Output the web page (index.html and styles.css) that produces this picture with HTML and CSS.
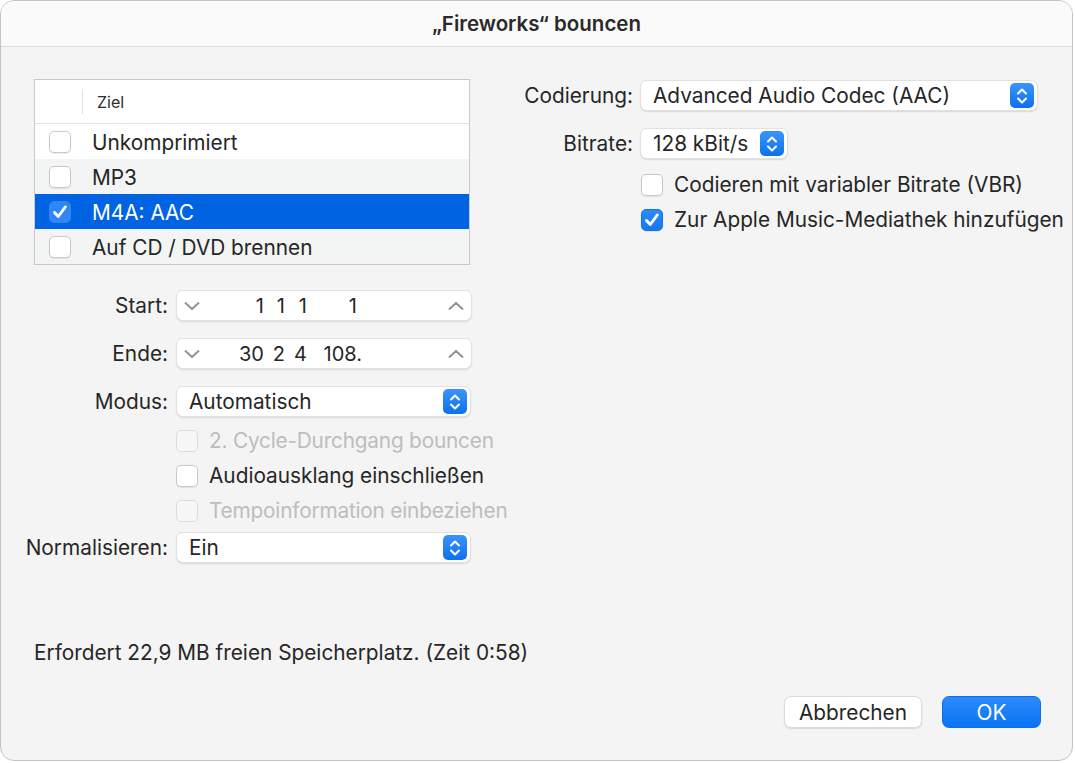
FILE: index.html
```html
<!DOCTYPE html>
<html lang="de">
<head>
<meta charset="utf-8">
<title>„Fireworks“ bouncen</title>
<link rel="stylesheet" href="styles.css">
</head>
<body>
<div class="window">
  <div class="titlebar"><span class="title">„Fireworks“ bouncen</span></div>
  <div class="content">
    <div class="main">
      <div class="left">
        <div class="table">
          <div class="thead"><span class="colsep"></span><span class="th">Ziel</span></div>
          <div class="trow"><span class="cb"></span><span class="tlabel">Unkomprimiert</span></div>
          <div class="trow alt"><span class="cb"></span><span class="tlabel">MP3</span></div>
          <div class="trow sel"><span class="cb on-sel"><svg viewBox="0 0 22 22" width="22" height="22"><path d="M5.5 11.5 L9.3 15.5 L16.3 6" fill="none" stroke="#fff" stroke-width="2.9" stroke-linecap="round" stroke-linejoin="round"/></svg></span><span class="tlabel">M4A: AAC</span></div>
          <div class="trow alt"><span class="cb"></span><span class="tlabel">Auf CD / DVD brennen</span></div>
        </div>

        <div class="form">
          <div class="frow first">
            <span class="flabel">Start:</span>
            <div class="stepper">
              <svg class="chev" viewBox="0 0 16 8" width="16" height="8"><path d="M1.5 1 L8 7 L14.5 1" fill="none" stroke="#8d8d8d" stroke-width="1.8" stroke-linecap="round" stroke-linejoin="round"/></svg>
              <div class="vals"><span class="v1">1</span><span class="v2">1</span><span class="v3">1</span><span class="v4">1</span></div>
              <svg class="chev" viewBox="0 0 16 8" width="16" height="8"><path d="M1.5 7 L8 1 L14.5 7" fill="none" stroke="#8d8d8d" stroke-width="1.8" stroke-linecap="round" stroke-linejoin="round"/></svg>
            </div>
          </div>
          <div class="frow">
            <span class="flabel">Ende:</span>
            <div class="stepper">
              <svg class="chev" viewBox="0 0 16 8" width="16" height="8"><path d="M1.5 1 L8 7 L14.5 1" fill="none" stroke="#8d8d8d" stroke-width="1.8" stroke-linecap="round" stroke-linejoin="round"/></svg>
              <div class="vals"><span class="v1">30</span><span class="v2">2</span><span class="v3">4</span><span class="v4 last">108.</span></div>
              <svg class="chev" viewBox="0 0 16 8" width="16" height="8"><path d="M1.5 7 L8 1 L14.5 7" fill="none" stroke="#8d8d8d" stroke-width="1.8" stroke-linecap="round" stroke-linejoin="round"/></svg>
            </div>
          </div>
          <div class="frow">
            <span class="flabel">Modus:</span>
            <div class="popup wide">
              <span class="ptext">Automatisch</span>
              <span class="arrows"><svg viewBox="0 0 24 26" width="24" height="26"><path d="M8 10.5 L12 6.5 L16 10.5 M8 15.5 L12 19.5 L16 15.5" fill="none" stroke="#fff" stroke-width="2" stroke-linecap="round" stroke-linejoin="round"/></svg></span>
            </div>
          </div>
          <div class="crow disabled"><span class="cb"></span><span>2. Cycle-Durchgang bouncen</span></div>
          <div class="crow"><span class="cb"></span><span>Audioausklang einschließen</span></div>
          <div class="crow disabled"><span class="cb"></span><span>Tempoinformation einbeziehen</span></div>
          <div class="frow norm">
            <span class="flabel">Normalisieren:</span>
            <div class="popup wide">
              <span class="ptext">Ein</span>
              <span class="arrows"><svg viewBox="0 0 24 26" width="24" height="26"><path d="M8 10.5 L12 6.5 L16 10.5 M8 15.5 L12 19.5 L16 15.5" fill="none" stroke="#fff" stroke-width="2" stroke-linecap="round" stroke-linejoin="round"/></svg></span>
            </div>
          </div>
        </div>
      </div>

      <div class="right">
        <div class="rrow">
          <span class="rlabel">Codierung:</span>
          <div class="popup codec">
            <span class="ptext">Advanced Audio Codec (AAC)</span>
            <span class="arrows"><svg viewBox="0 0 24 26" width="24" height="26"><path d="M8 10.5 L12 6.5 L16 10.5 M8 15.5 L12 19.5 L16 15.5" fill="none" stroke="#fff" stroke-width="2" stroke-linecap="round" stroke-linejoin="round"/></svg></span>
          </div>
        </div>
        <div class="rrow second">
          <span class="rlabel">Bitrate:</span>
          <div class="popup bitrate">
            <span class="ptext">128 kBit/s</span>
            <span class="arrows"><svg viewBox="0 0 24 26" width="24" height="26"><path d="M8 10.5 L12 6.5 L16 10.5 M8 15.5 L12 19.5 L16 15.5" fill="none" stroke="#fff" stroke-width="2" stroke-linecap="round" stroke-linejoin="round"/></svg></span>
          </div>
        </div>
        <div class="rcheck first"><span class="cb"></span><span>Codieren mit variabler Bitrate (VBR)</span></div>
        <div class="rcheck"><span class="cb checked"><svg viewBox="0 0 22 22" width="22" height="22"><path d="M5.5 11.5 L9.3 15.5 L16.3 6" fill="none" stroke="#fff" stroke-width="2.9" stroke-linecap="round" stroke-linejoin="round"/></svg></span><span>Zur Apple Music-Mediathek hinzufügen</span></div>
      </div>
    </div>

    <div class="info">Erfordert 22,9 MB freien Speicherplatz. (Zeit 0:58)</div>
    <div class="buttons">
      <button class="btn cancel">Abbrechen</button>
      <button class="btn ok">OK</button>
    </div>
  </div>
</div>
</body>
</html>
```

FILE: styles.css
```css
* { box-sizing: border-box; }

html, body {
  margin: 0;
  padding: 0;
  background: #ffffff;
}

body {
  font-family: Inter, "Noto Sans", "Liberation Sans", sans-serif;
  font-size: 20.8px;
  color: #262626;
}

.window {
  width: 1073px;
  height: 761px;
  border: 1px solid #c4c4c4;
  border-radius: 14px;
  background: #f4f4f4;
  overflow: hidden;
  display: flex;
  flex-direction: column;
}

.titlebar {
  height: 46px;
  flex: 0 0 46px;
  background: #fafafa;
  border-bottom: 1px solid #dedede;
  display: flex;
  align-items: center;
  justify-content: center;
}

.title {
  font-size: 20.5px;
  font-weight: 600;
  color: #2a2a2a;
  padding-bottom: 1px;
}

.content {
  flex: 1;
  display: flex;
  flex-direction: column;
}

.main {
  flex: 1;
  display: flex;
  padding-top: 32px;
}

.left {
  width: 499px;
  padding-left: 33px;
}

/* table */
.table {
  width: 436px;
  background: #ffffff;
  border: 1px solid #c9c9c9;
}

.thead {
  height: 44px;
  border-bottom: 1px solid #e2e2e2;
  display: flex;
  align-items: center;
}

.colsep {
  width: 1px;
  height: 25px;
  margin-left: 47px;
  background: #e2e2e2;
}

.th {
  font-size: 16px;
  margin-left: 14px;
  color: #2c2c2c;
}

.trow {
  height: 35px;
  display: flex;
  align-items: center;
  padding-left: 14px;
  white-space: nowrap;
}

.trow.alt { background: #f3f4f4; }
.trow.sel { background: #0063e1; color: #ffffff; }

.tlabel { margin-left: 21px; padding-top: 2px; }

/* checkbox */
.cb {
  width: 22px;
  height: 22px;
  flex: 0 0 22px;
  border-radius: 5px;
  background: #ffffff;
  border: 1px solid #c9c9c9;
  box-shadow: 0 0.5px 1px rgba(0, 0, 0, 0.08);
  display: inline-flex;
  align-items: center;
  justify-content: center;
  overflow: hidden;
}

.cb svg { display: block; flex: 0 0 22px; }

.cb.checked {
  background: linear-gradient(#2b8bf8, #1478f0);
  border-color: #1473ea;
}

.cb.on-sel {
  background: #2f86f5;
  border-color: #2f86f5;
  box-shadow: none;
}

/* form */
.form {
  margin-left: -14px;
  margin-top: 25px;
}

.frow {
  display: flex;
  align-items: center;
  gap: 8px;
  margin-top: 17px;
}

.frow.first { margin-top: 0; }
.frow.norm { margin-top: 4px; }

.flabel {
  width: 148px;
  text-align: right;
  white-space: nowrap;
  display: flex;
  justify-content: flex-end;
}

.stepper {
  width: 296px;
  height: 31px;
  background: #ffffff;
  border-radius: 7px;
  border: 1px solid #e1e1e1;
  box-shadow: 0 1px 1.5px rgba(0, 0, 0, 0.12);
  display: flex;
  align-items: center;
  padding: 0 7px 0 7px;
}

.stepper .chev { flex: 0 0 16px; }

.vals {
  flex: 1;
  display: flex;
  font-size: 20px;
  padding-left: 12px;
}

.vals span { text-align: right; }
.vals .v1 { width: 52px; }
.vals .v2 { width: 21px; }
.vals .v3 { width: 22px; }
.vals .v4 { width: 50px; }
.vals .v4.last { width: 55px; }

.popup {
  height: 31px;
  background: #ffffff;
  border-radius: 7px;
  border: 1px solid #e1e1e1;
  box-shadow: 0 1px 1.5px rgba(0, 0, 0, 0.12);
  display: flex;
  align-items: center;
  justify-content: space-between;
  padding: 0 3px 0 12px;
  white-space: nowrap;
}

.popup.wide { width: 295px; }
.popup.codec { width: 398px; }
.popup.bitrate { width: 148px; }

.arrows {
  width: 24px;
  height: 25px;
  flex: 0 0 24px;
  border-radius: 5px;
  background: linear-gradient(#3b94fa, #0c71ee);
  display: flex;
  align-items: center;
  justify-content: center;
  overflow: hidden;
}

.arrows svg { display: block; }

.crow {
  height: 35px;
  display: flex;
  align-items: center;
  gap: 11px;
  padding-left: 156px;
  white-space: nowrap;
}

.form .frow + .crow { margin-top: 6px; }

.crow.disabled { color: #bdbdbd; letter-spacing: -0.2px; }
.crow.disabled .cb {
  background: #f7f7f7;
  border-color: #dcdcdc;
  box-shadow: none;
}

/* right */
.right {
  flex: 1;
  padding-top: 1px;
}

.rrow {
  display: flex;
  align-items: center;
  gap: 7px;
}

.rrow.second { margin-top: 17px; }

.rlabel {
  width: 133px;
  text-align: right;
  white-space: nowrap;
}

.rcheck {
  height: 35px;
  display: flex;
  align-items: center;
  gap: 11px;
  padding-left: 141px;
  white-space: nowrap;
}

.rcheck.first { margin-top: 8px; }

/* footer */
.info {
  padding-left: 33px;
  line-height: 24px;
  height: 24px;
  white-space: nowrap;
}

.buttons {
  display: flex;
  justify-content: flex-end;
  gap: 20px;
  padding: 31px 31px 32px 0;
}

.btn {
  font-family: inherit;
  font-size: 20.8px;
  height: 32px;
  border-radius: 7px;
  padding: 0;
  cursor: default;
}

.btn.cancel {
  width: 138px;
  background: #ffffff;
  color: #262626;
  border: 1px solid #dcdcdc;
  box-shadow: 0 1px 1.5px rgba(0, 0, 0, 0.12);
}

.btn.ok {
  width: 99px;
  background: linear-gradient(#2a8bfc, #0b74f4);
  color: #ffffff;
  border: 1px solid #0d6fe6;
}
```
